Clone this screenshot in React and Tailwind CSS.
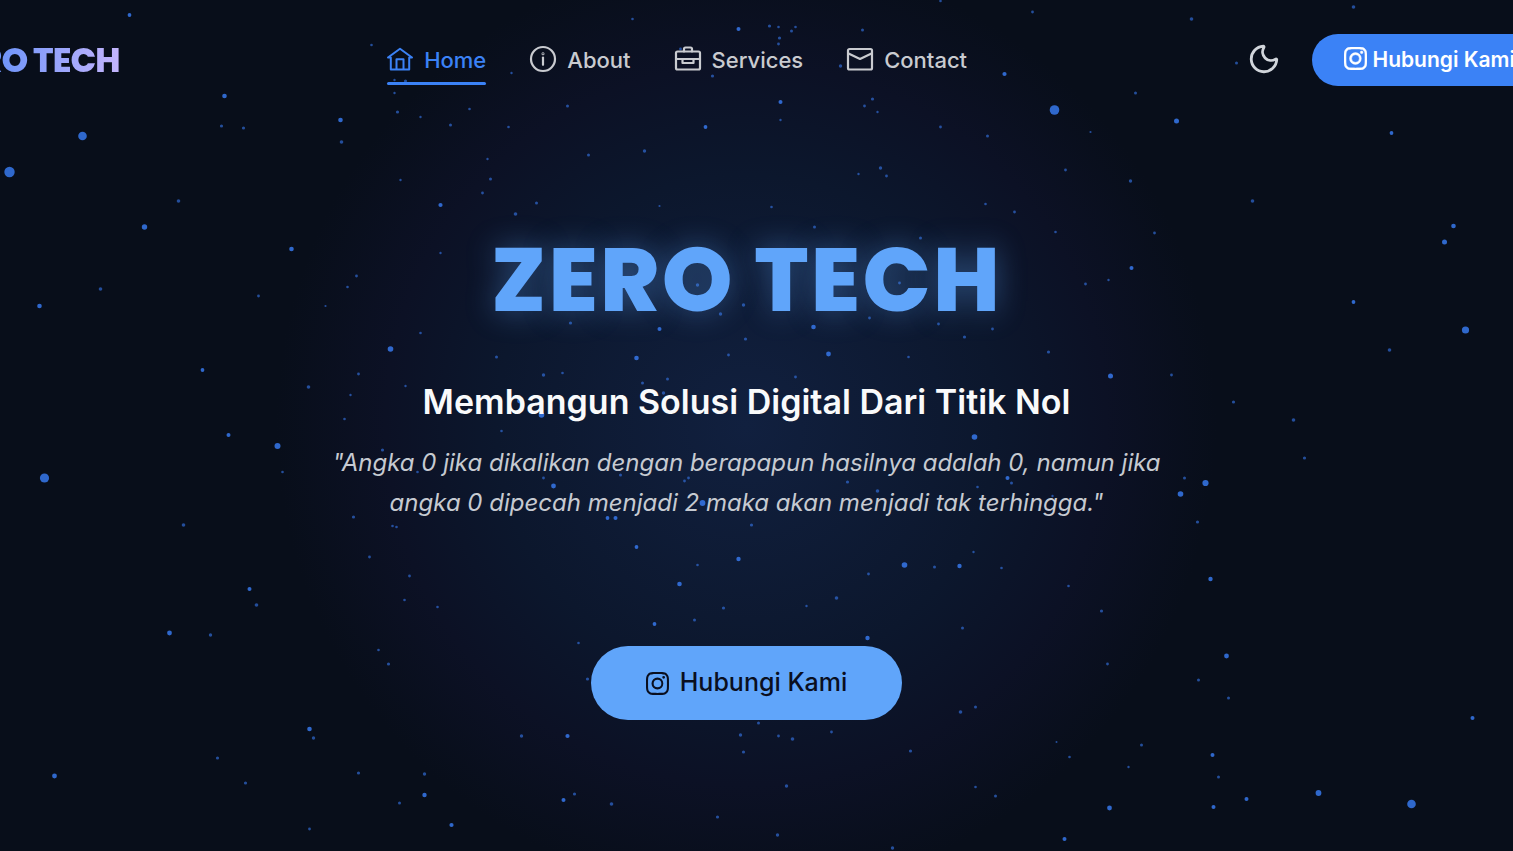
import React, { useState } from "react";
import { Moon, Sun } from "lucide-react";
import { BsInstagram } from "react-icons/bs";

const iconProps = {
  viewBox: "0 0 26 26",
  fill: "none",
  stroke: "currentColor",
  strokeWidth: 2.2,
  strokeLinecap: "round",
  strokeLinejoin: "round",
  className: "size-[26px] overflow-visible",
  "aria-hidden": true,
};

const HomeIcon = () => (
  <svg {...iconProps}>
    <path d="M1 10.500 13 1.800l12 8.700M1 10.500H3.800V22.500H22.200V10.500H25M9.500 22V12.200H16.500V22" strokeWidth="2" />
  </svg>
);

const InfoIcon = () => (
  <svg {...iconProps}>
    <circle cx="13" cy="12" r="12" />
    <path d="M13 10.500V17.800" />
    <circle cx="13" cy="6.800" r="0.400" />
  </svg>
);

const BriefcaseIcon = () => (
  <svg {...iconProps}>
    <rect x="1" y="4.500" width="24" height="18" rx="1.500" />
    <path d="M9 4.500V2a1.500 1.500 0 0 1 1.500-1.500h5A1.500 1.500 0 0 1 17 2v2.500M1 12h24M7.500 12v4h11v-4" />
  </svg>
);

const MailIcon = () => (
  <svg {...iconProps}>
    <rect x="1" y="2" width="24" height="20.500" rx="1.500" />
    <path d="M1.500 6.500 13 12l11.500-5.500" />
  </svg>
);

const NAV = [
  { to: "#home", label: "Home", Icon: HomeIcon },
  { to: "#about", label: "About", Icon: InfoIcon },
  { to: "#services", label: "Services", Icon: BriefcaseIcon },
  { to: "#contact", label: "Contact", Icon: MailIcon },
];

// x, y, radius
const STARS = [
  [9, 172, 5.2], [82, 136, 4.3], [44, 478, 4.6], [1054, 110, 4.8], [1411, 804, 4.3], [1465, 330, 3.6],
  [144, 227, 2.7], [277, 446, 3], [390, 349, 2.8], [1205, 483, 3.1], [1180, 494, 2.8], [1318, 793, 2.9],
  [129, 15, 1.9], [224, 96, 2.3], [340, 120, 2.3], [341, 142, 1.8], [221, 126, 1.6], [243, 128, 1.6],
  [178, 201, 1.8], [291, 249, 2.3], [440, 205, 2.1], [371, 45, 1.3], [394, 80, 1.2], [405, 81, 1.6],
  [394, 93, 1.2], [397, 112, 1.6], [420, 117, 1.2], [450, 125, 1.5], [469, 109, 1.3], [487, 159, 1.2],
  [490, 179, 1.5], [400, 180, 1.2], [482, 193, 1.4], [440, 253, 1.2], [356, 276, 1.4],
  [39, 306, 2.3], [100, 289, 1.8], [258, 296, 1.4], [347, 287, 1.3], [325, 306, 1.1], [420, 333, 1.3],
  [202, 370, 1.9], [308, 387, 1.8], [358, 374, 1.4], [350, 395, 1.2], [405, 386, 1.2], [344, 419, 1.3],
  [228, 435, 2], [282, 472, 1.3], [382, 450, 1.6], [417, 472, 1.3], [183, 525, 1.8], [353, 517, 1.6],
  [392, 526, 1.3], [396, 527, 1.3], [369, 557, 1.4], [496, 357, 1.5],
  [249, 589, 2], [256, 605, 1.8], [169, 633, 2.4], [210, 635, 1.7], [409, 576, 1.4], [404, 600, 1.3],
  [437, 607, 1.3], [378, 650, 1.3], [388, 664, 1.6], [309, 729, 2.3], [313, 738, 1.7], [217, 758, 1.6],
  [245, 783, 1.6], [54, 776, 2.4], [358, 773, 1.6], [424, 774, 1.7], [424, 795, 2.2], [399, 803, 1.5],
  [451, 825, 2.1], [309, 829, 1.4],
  [511, 73, 1.2], [632, 19, 1.3], [738, 29, 2], [769, 26, 1.6], [778, 27, 1.3], [791, 31, 1.5],
  [795, 27, 1.3], [680, 49, 1.4], [712, 76, 1.6], [779, 38, 1.6], [778, 44, 1.4], [840, 66, 1.7],
  [862, 30, 1.5], [940, 1, 1.3], [1032, 12, 1.4], [1191, 19, 1.8], [1353, 7, 1.8], [1236, 63, 1.5],
  [1391, 133, 1.9], [1004, 74, 2.1], [1135, 93, 1.5], [1176, 121, 2.5], [1090, 132, 1.1], [987, 136, 1.5],
  [872, 99, 1.6], [864, 106, 1.4], [877, 112, 1.2], [780, 102, 2], [780, 120, 1.2], [705, 127, 1.9],
  [567, 106, 1.5], [508, 127, 1.3], [644, 151, 1.7], [588, 155, 1.5], [659, 206, 1.1], [771, 207, 1.3],
  [880, 168, 1.7], [886, 176, 1.4], [858, 174, 1.2], [940, 127, 1.4], [1065, 170, 1.4], [1130, 181, 1.7],
  [1014, 212, 1.4], [985, 204, 1.3], [515, 214, 1.8], [536, 203, 1.5], [1252, 201, 1.8], [1154, 233, 1.4],
  [814, 227, 1.5], [920, 238, 1.5], [982, 265, 1.5], [1055, 232, 1.3], [1453, 226, 2.3], [1444, 242, 2.5],
  [1131, 268, 2], [1085, 284, 1.4], [1108, 280, 1.2], [697, 285, 1.7], [899, 283, 1.4], [948, 294, 1.5],
  [1353, 302, 1.9], [1389, 350, 1.8], [743, 305, 1.7], [720, 314, 1.7], [841, 306, 1.6], [979, 301, 1.4],
  [570, 323, 1.6], [659, 329, 2], [869, 318, 1.4], [938, 324, 1.4], [813, 327, 2.3], [828, 354, 2.4],
  [636, 358, 2.3], [728, 355, 1.4], [745, 339, 1.6], [964, 337, 1.6], [992, 329, 1.4], [1048, 352, 1.6],
  [908, 357, 1.3], [543, 375, 1.7], [562, 373, 1.3], [667, 379, 1.5], [642, 383, 1.5], [663, 393, 1.7],
  [519, 401, 2.4], [541, 415, 2.8], [501, 431, 1.3], [795, 377, 1.4], [1110, 376, 2.5], [1171, 375, 1.4],
  [974, 437, 2.8], [1233, 402, 1.6], [1293, 420, 1.8], [1304, 458, 1.6], [543, 478, 1.4], [553, 486, 2.4],
  [620, 475, 1.5], [684, 481, 1.4], [688, 478, 1.4], [702, 503, 2.9], [607, 518, 1.9], [615, 518, 2],
  [847, 482, 1.6], [877, 491, 1.8], [1007, 478, 2], [1011, 483, 1.5], [977, 487, 1.3], [1184, 478, 1.5],
  [1197, 522, 1.6], [1052, 496, 1.2], [751, 525, 1.6], [636, 547, 1.9], [738, 559, 2.2], [697, 565, 1.3],
  [679, 584, 2.3], [868, 574, 1.4], [904, 565, 2.8], [934, 567, 1.5], [959, 566, 2.2], [1001, 568, 1.3],
  [973, 552, 1.2], [723, 608, 1.6], [694, 620, 1.5], [654, 624, 1.9], [836, 598, 1.8], [806, 606, 1.2],
  [962, 628, 1.5], [867, 638, 2.2], [578, 643, 1.3], [587, 679, 1.6], [1068, 586, 1.3], [1101, 611, 1.6],
  [1210, 579, 2.2], [1226, 656, 2.4], [1107, 664, 1.4], [1198, 680, 1.5], [1228, 698, 1.5],
  [960, 712, 1.8], [975, 707, 1.5], [521, 736, 1.7], [567, 736, 2.1], [740, 735, 1.7], [758, 723, 1.5],
  [778, 736, 1.4], [792, 739, 1.8], [831, 732, 1.4], [743, 752, 1.6], [910, 751, 1.6], [1056, 742, 1],
  [1141, 745, 1.5], [1069, 757, 1.3], [1128, 767, 1.2], [1212, 755, 2], [1218, 777, 1.5], [1472, 718, 2],
  [563, 800, 2], [574, 794, 1.6], [611, 804, 1.8], [786, 786, 1.7], [717, 817, 1.6], [777, 835, 1.7],
  [975, 787, 1.3], [995, 796, 1.5], [892, 848, 1.7], [1109, 808, 2.4], [1213, 807, 2], [1246, 799, 2],
  [1064, 839, 2],
];

function Starfield() {
  return (
    <svg
      className="absolute inset-0 size-full pointer-events-none"
      viewBox="0 0 1513 851"
      preserveAspectRatio="xMidYMid slice"
      aria-hidden="true"
    >
      {STARS.map(([x, y, r]) => (
        <circle key={`${x}-${y}`} cx={x + 0.5} cy={y} r={r} fill="#3472e0" opacity={r > 1.8 ? 0.9 : 0.65} />
      ))}
    </svg>
  );
}

function Header({ dark, toggle }) {
  return (
    <header className="-mx-[58px] pt-[34px] flex items-center justify-between">
      <a
        href="#home"
        className="font-[Poppins,Inter,sans-serif] font-extrabold text-[34px] leading-[52px] tracking-tight whitespace-nowrap bg-gradient-to-r from-[#3b82f6] to-[#c4b5fd] bg-clip-text text-transparent"
      >
        ZERO TECH
      </a>

      <nav className="flex items-center gap-11 mr-3">
        {NAV.map(({ to, label, Icon }, i) => (
          <a
            key={to}
            href={to}
            className={`relative flex items-center gap-[11px] h-[50px] text-[22px] font-medium ${
              i === 0
                ? "text-[#3b82f6] after:absolute after:inset-x-0 after:bottom-0 after:h-[3px] after:rounded-full after:bg-[#3b82f6]"
                : "text-[#c9cbd0]"
            }`}
          >
            <Icon />
            {label}
          </a>
        ))}
      </nav>

      <div className="flex items-center gap-[31px]">
        <button onClick={toggle} className="pb-[2px] text-[#d1d5db]" aria-label="Toggle theme">
          {dark ? <Moon size={34} /> : <Sun size={34} />}
        </button>
        <a
          href="#contact"
          className="flex items-center gap-[6px] h-[52px] pl-8 pr-9 rounded-full bg-[#3b82f6] text-white text-[21px] font-semibold whitespace-nowrap"
        >
          <BsInstagram size={23} className="mb-[3px]" strokeWidth={0.3} />
          Hubungi Kami
        </a>
      </div>
    </header>
  );
}

export default function App() {
  const [dark, setDark] = useState(true);

  return (
    <div className="relative min-h-screen overflow-hidden pr-5 bg-[#080e1a] bg-[radial-gradient(circle_at_746px_425px,#11203f_0,#0c172d_250px,#0c1125_360px,#080e1a_470px)] font-[Inter,sans-serif]">
      <Starfield />
      <div className="relative">
        <Header dark={dark} toggle={() => setDark((v) => !v)} />

        <main id="home" className="flex flex-col items-center pt-[140px] px-8 text-center">
          <h1 className="font-[Poppins,Inter,sans-serif] font-extrabold text-[90px] leading-[108px] tracking-wide text-[#60a5fa] [text-shadow:0_0_30px_rgba(96,165,250,0.4)]">
            ZERO TECH
          </h1>
          <h2 className="mt-[44px] text-[34px] leading-[48px] font-semibold text-[#f9fafb]">
            Membangun Solusi Digital Dari Titik Nol
          </h2>
          <p className="mt-[17px] max-w-[880px] text-[24px] leading-[40px] italic text-[#c6cad1]">
            "Angka 0 jika dikalikan dengan berapapun hasilnya adalah 0, namun jika angka 0 dipecah menjadi 2 maka akan
            menjadi tak terhingga."
          </p>
          <a
            href="#contact"
            className="mt-[123px] flex items-center gap-[11px] h-[74px] px-[55px] rounded-full bg-[#60a5fa] text-[#0a0f1f] text-[25px] font-medium"
          >
            <BsInstagram size={23} />
            Hubungi Kami
          </a>
        </main>
      </div>
    </div>
  );
}
